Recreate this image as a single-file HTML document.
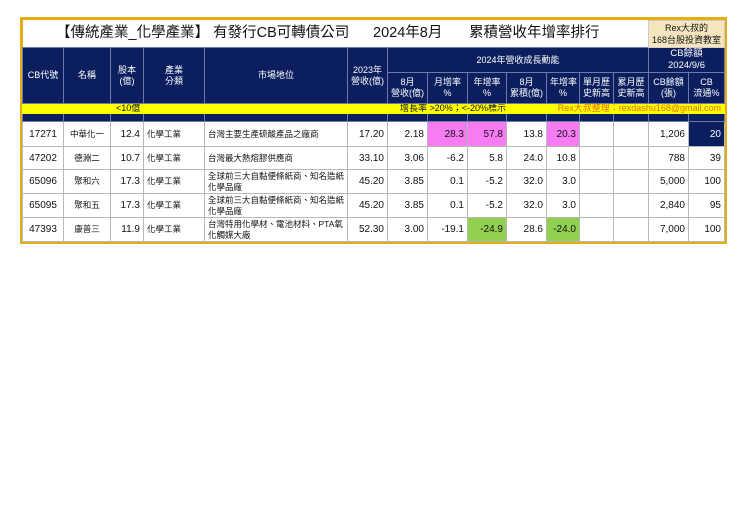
<!DOCTYPE html>
<html><head><meta charset="utf-8"><style>
body{margin:0;background:#fff;width:740px;height:523px;position:relative;font-family:"Liberation Sans","Noto Sans CJK TC",sans-serif;}
#f{position:absolute;left:20px;top:17px;width:701px;height:221px;border:3px solid #e4ad12;background:#fff;}
table{position:absolute;left:22px;top:20px;border-collapse:collapse;table-layout:fixed;width:702px;}
td{padding:0 3px;font-size:10px;color:#111;border:1px solid #b8b8b8;overflow:hidden;white-space:nowrap;line-height:11px}
.k{font-size:8.5px}
.h td{background:#0b1f5e;color:#fff;border:1px solid #6b7aa8;text-align:center;font-size:9px}
.r{text-align:right}.c{text-align:center}
.pk{background:#f77bf2}.gr{background:#92d050}
.y td{background:#ffff00;border-color:#ffff00;font-size:9px;line-height:9px;height:9px;padding-top:0;padding-bottom:0}
.bl td{height:7px;line-height:7px;font-size:1px;padding:0}
.m{white-space:normal;font-size:8.5px;line-height:11px;padding-right:0}
.t{position:absolute;top:24px;font-size:14.5px;color:#111;white-space:nowrap;line-height:18px}
</style></head><body>
<div id="f"></div>
<table>
<colgroup><col style="width:41px"><col style="width:47px"><col style="width:33px"><col style="width:61px"><col style="width:143px"><col style="width:40px"><col style="width:40px"><col style="width:40px"><col style="width:39px"><col style="width:40px"><col style="width:33px"><col style="width:34px"><col style="width:35px"><col style="width:40px"><col style="width:36px"></colgroup>
<tr style="height:27px"><td colspan="13" style="border:none"></td><td colspan="2" style="background:#f6e6bf;text-align:center;font-size:9px;line-height:12px;border:1px solid #ccc">Rex大叔的<br>168台股投資教室</td></tr>
<tr class="h" style="height:24px"><td rowspan="2">CB代號</td><td rowspan="2">名稱</td><td rowspan="2">股本<br>(億)</td><td rowspan="2">產業<br>分類</td><td rowspan="2">市場地位</td><td rowspan="2">2023年<br>營收(億)</td><td colspan="7">2024年營收成長動能</td><td colspan="2" style="line-height:12px;font-size:9.5px">CB餘額<br>2024/9/6</td></tr>
<tr class="h" style="height:31px;"><td>8月<br>營收(億)</td><td>月增率<br>%</td><td>年增率<br>%</td><td>8月<br>累積(億)</td><td>年增率<br>%</td><td>單月歷<br>史新高</td><td>累月歷<br>史新高</td><td>CB餘額<br>(張)</td><td>CB<br>流通%</td></tr>
<tr class="y"><td></td><td></td><td colspan="4" style="padding-left:5px">&lt;10億</td><td colspan="3" style="text-align:right;padding-right:0">增長率 &gt;20%；&lt;-20%標示</td><td colspan="6" style="text-align:right;color:#e36c09">Rex大叔整理：rexdashu168@gmail.com</td></tr>
<tr class="h bl"><td></td><td></td><td></td><td></td><td></td><td></td><td></td><td></td><td></td><td></td><td></td><td></td><td></td><td></td><td></td></tr>
<tr style="height:25px"><td class="c">17271</td><td class="c k">中華化一</td><td class="r">12.4</td><td class="k">化學工業</td><td class="m">台灣主要生產硫酸產品之廠商</td><td class="r">17.20</td><td class="r">2.18</td><td class="r pk">28.3</td><td class="r pk">57.8</td><td class="r">13.8</td><td class="r pk">20.3</td><td></td><td></td><td class="r">1,206</td><td class="r" style="background:#0b1f5e;color:#fff">20</td></tr>
<tr style="height:23px"><td class="c">47202</td><td class="c k">德淵二</td><td class="r">10.7</td><td class="k">化學工業</td><td class="m">台灣最大熱熔膠供應商</td><td class="r">33.10</td><td class="r">3.06</td><td class="r">-6.2</td><td class="r">5.8</td><td class="r">24.0</td><td class="r">10.8</td><td></td><td></td><td class="r">788</td><td class="r">39</td></tr>
<tr style="height:24px"><td class="c">65096</td><td class="c k">聚和六</td><td class="r">17.3</td><td class="k">化學工業</td><td class="m">全球前三大自黏便條紙商、知名造紙<br>化學品廠</td><td class="r">45.20</td><td class="r">3.85</td><td class="r">0.1</td><td class="r">-5.2</td><td class="r">32.0</td><td class="r">3.0</td><td></td><td></td><td class="r">5,000</td><td class="r">100</td></tr>
<tr style="height:24px"><td class="c">65095</td><td class="c k">聚和五</td><td class="r">17.3</td><td class="k">化學工業</td><td class="m">全球前三大自黏便條紙商、知名造紙<br>化學品廠</td><td class="r">45.20</td><td class="r">3.85</td><td class="r">0.1</td><td class="r">-5.2</td><td class="r">32.0</td><td class="r">3.0</td><td></td><td></td><td class="r">2,840</td><td class="r">95</td></tr>
<tr style="height:24px"><td class="c">47393</td><td class="c k">康普三</td><td class="r">11.9</td><td class="k">化學工業</td><td class="m">台灣特用化學材、電池材料、PTA氧<br>化觸媒大廠</td><td class="r">52.30</td><td class="r">3.00</td><td class="r">-19.1</td><td class="r gr">-24.9</td><td class="r">28.6</td><td class="r gr">-24.0</td><td></td><td></td><td class="r">7,000</td><td class="r">100</td></tr>
</table>
<div class="t" style="left:56px">【傳統產業_化學產業】 有發行CB可轉債公司</div>
<div class="t" style="left:373px">2024年8月</div>
<div class="t" style="left:469px">累積營收年增率排行</div>
</body></html>
